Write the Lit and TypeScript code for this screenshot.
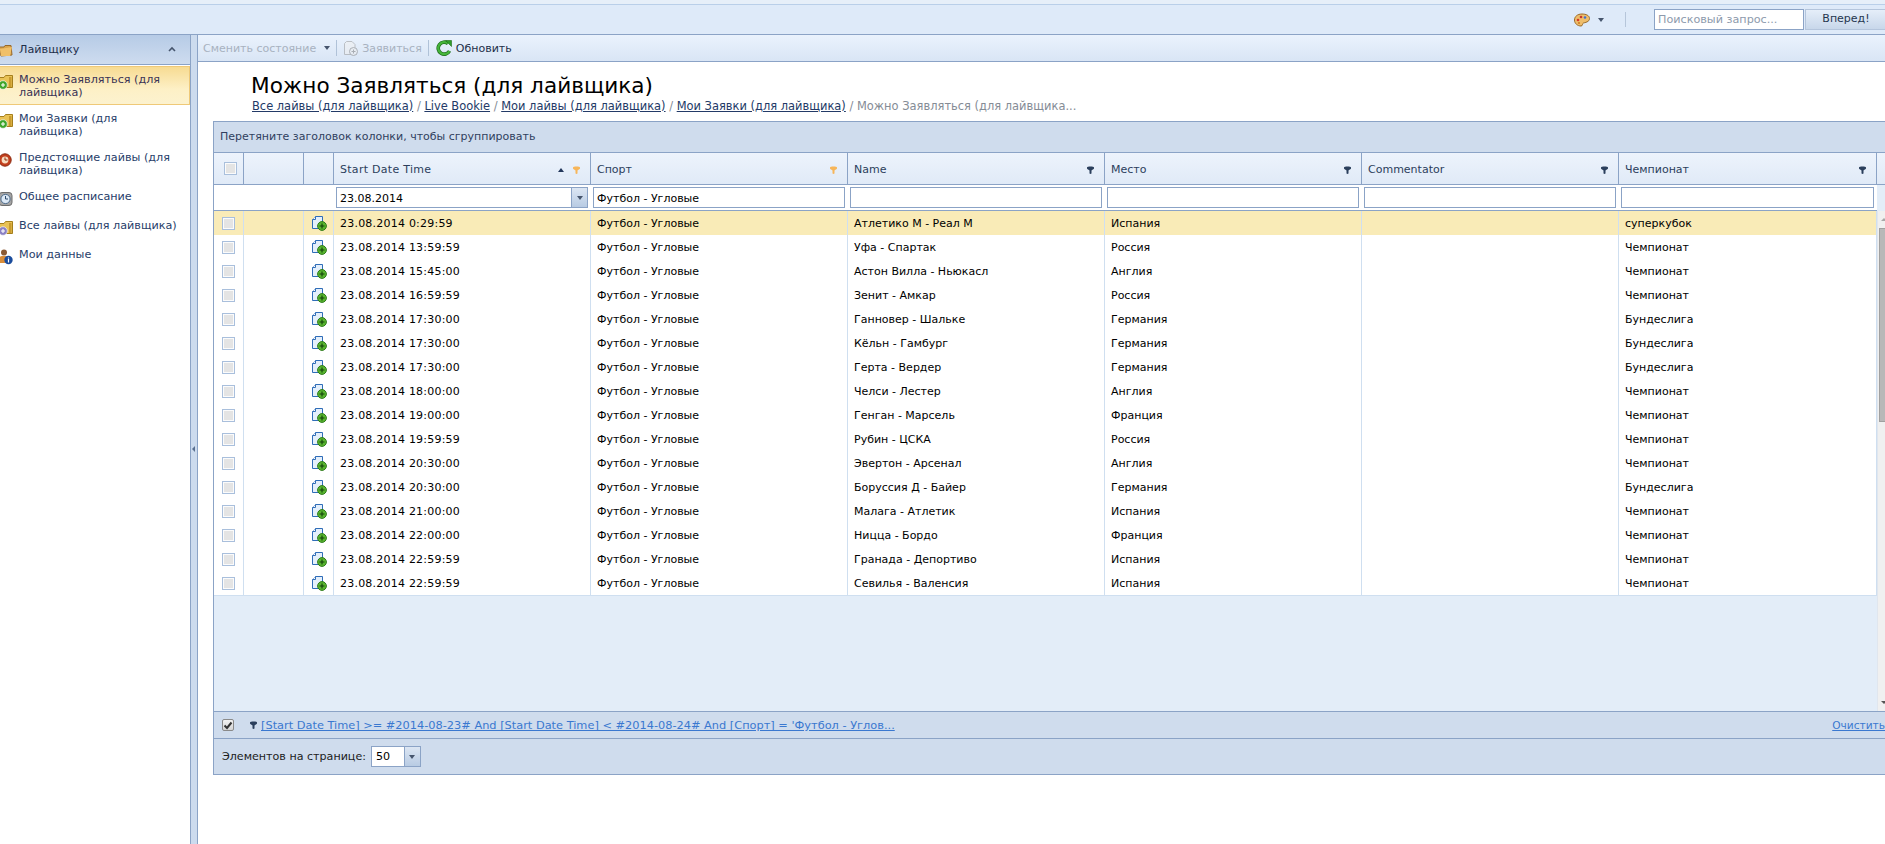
import { LitElement, html, css, svg } from "lit";
import { customElement } from "lit/decorators.js";

const rows = [
  ["23.08.2014 0:29:59", "Атлетико М - Реал М", "Испания", "суперкубок"],
  ["23.08.2014 13:59:59", "Уфа - Спартак", "Россия", "Чемпионат"],
  ["23.08.2014 15:45:00", "Астон Вилла - Ньюкасл", "Англия", "Чемпионат"],
  ["23.08.2014 16:59:59", "Зенит - Амкар", "Россия", "Чемпионат"],
  ["23.08.2014 17:30:00", "Ганновер - Шальке", "Германия", "Бундеслига"],
  ["23.08.2014 17:30:00", "Кёльн - Гамбург", "Германия", "Бундеслига"],
  ["23.08.2014 17:30:00", "Герта - Вердер", "Германия", "Бундеслига"],
  ["23.08.2014 18:00:00", "Челси - Лестер", "Англия", "Чемпионат"],
  ["23.08.2014 19:00:00", "Генган - Марсель", "Франция", "Чемпионат"],
  ["23.08.2014 19:59:59", "Рубин - ЦСКА", "Россия", "Чемпионат"],
  ["23.08.2014 20:30:00", "Эвертон - Арсенал", "Англия", "Чемпионат"],
  ["23.08.2014 20:30:00", "Боруссия Д - Байер", "Германия", "Бундеслига"],
  ["23.08.2014 21:00:00", "Малага - Атлетик", "Испания", "Чемпионат"],
  ["23.08.2014 22:00:00", "Ницца - Бордо", "Франция", "Чемпионат"],
  ["23.08.2014 22:59:59", "Гранада - Депортиво", "Испания", "Чемпионат"],
  ["23.08.2014 22:59:59", "Севилья - Валенсия", "Испания", "Чемпионат"],
];

const funnel = (c: string) => html`<svg class="fn" width="7" height="8" viewBox="0 0 7 8"><path d="M0 1.5C0 .2 7 .2 7 1.5V2.4C7 3.2 5 3.8 4.5 4.4V7.4L3.5 8L2.5 7.4V4.4C2 3.8 0 3.2 0 2.4Z" fill="${c}"/></svg>`;
const addDoc = () => html`<svg width="15" height="15" viewBox="0 0 15 15"><path d="M3.5 .5H10.5V12.5H.5V3.5Z" fill="#e4effb" stroke="#2f6db8"/><path d="M3.5 .5V3.5H.5" fill="#fff" stroke="#2f6db8"/><circle cx="10" cy="10" r="4.4" fill="#58b52f" stroke="#2d7a18"/><path d="M7.5 10H12.5M10 7.5V12.5" stroke="#123f0a" stroke-width="1.1"/></svg>`;
const folderBadge = (c: string) => svg`<path d="M-1 3.5H4L5.5 1.5H12.5V13.5H-1Z" fill="#e9c255" stroke="#a57f1d"/><path d="M9 3H11.5V13H9Z" fill="#c99b2f"/><circle cx="3" cy="11" r="4.3" fill="${c}" stroke="#f4f4f4" stroke-width=".7"/><path d="M1 11H5M3 9V13" stroke="#fff" stroke-width="1.1"/>`;

const menu = [
  { t: "Можно Заявляться (для\nлайвщика)", i: folderBadge("#3da52b"), sel: true },
  { t: "Мои Заявки (для\nлайвщика)", i: folderBadge("#3da52b") },
  { t: "Предстоящие лайвы (для\nлайвщика)", i: svg`<circle cx="5" cy="8" r="6.2" fill="#c23f1d" stroke="#8c2a10"/><circle cx="5" cy="8" r="3.4" fill="#f6dcc0"/><path d="M5 5.5V8H7.5" stroke="#8c2a10" fill="none"/>` },
  { t: "Общее расписание", i: svg`<rect x="-1" y="1.5" width="13" height="13" rx="3" fill="#a4a4a4" stroke="#6d6d6d"/><circle cx="5.5" cy="8" r="4.6" fill="#dce9f6" stroke="#4d6b8c"/><path d="M5.5 5V8H8" stroke="#2d4a6c" fill="none"/>` },
  { t: "Все лайвы (для лайвщика)", i: folderBadge("#8a80c4") },
  { t: "Мои данные", i: svg`<circle cx="4" cy="3.5" r="3" fill="#8b5a34"/><path d="M-1 14V10Q-1 7.5 2 7H6Q9 7.5 9 10V14Z" fill="#d98d3a"/><circle cx="8.5" cy="11" r="4.2" fill="#1b4c9c"/><path d="M8.5 10V13.5M8.5 8.5V9.4" stroke="#fff" stroke-width="1.2"/>` },
];

@customElement("app-root")
export class AppRoot extends LitElement {
  static styles = css`
    :host { display: block; width: 1885px; height: 844px; overflow: hidden; background: #fff; font-family: "DejaVu Sans", Verdana, sans-serif; font-size: 11px; color: #000; }
    * { box-sizing: border-box; }
    .top { height: 35px; background: #deeaf9; border-bottom: 1px solid #8ba3c6; display: flex; flex-direction: column; }
    .top-strip { height: 5px; background: #e6eff9; border-bottom: 1px solid #b9cfe9; }
    .top-row { flex: 1; display: flex; align-items: center; justify-content: flex-end; }
    .palette { display: flex; align-items: center; gap: 8px; margin-right: 21px; }
    .arrow { width: 0; height: 0; border-left: 3.5px solid transparent; border-right: 3.5px solid transparent; border-top: 4px solid #46556d; }
    .vsep { width: 1px; height: 15px; background: #b6c6da; margin-right: 28px; }
    .search { width: 150px; height: 21px; flex: none; background: #fff; border: 1px solid #8ba3c6; color: #8d9aac; padding: 0 3px; line-height: 19px; margin-right: 1px; font-size: 11.2px; }
    .go { width: 82px; height: 21px; flex: none; margin-right: -2px; border: 1px solid #b4c5dc; background: linear-gradient(#e5eef9, #c8d7ea); line-height: 17px; text-align: center; color: #25364f; }
    .body { display: flex; height: 809px; }
    .side { width: 191px; background: #fff; border-right: 1px solid #8ba3c6; flex: none; font-size: 11.2px; }
    .side-h { height: 30px; background: linear-gradient(#b6cbe6, #cedcef); border-bottom: 1px solid #8ba3c6; display: flex; align-items: center; padding-left: 19px; color: #1e2f4a; position: relative; }
    .folder { position: absolute; left: -1px; top: 8px; }
    .chev { position: absolute; right: 14px; top: 11px; }
    .items { padding-top: 1px; }
    .item { display: flex; padding: 6px 4px 4px 0; line-height: 13px; color: #28406a; border: 1px solid transparent; border-left: 0; }
    .item svg { flex: none; margin-top: 1px; overflow: visible; }
    .item span { margin-left: 3px; white-space: pre-line; }
    .item.sel { background: linear-gradient(#f7db92, #fdf0c6 60%, #fcf2cf); border-color: #efc978; color: #3a3355; }
    .i2 { height: 39px; }
    .i1 { height: 29px; }
    .split { width: 7px; flex: none; background: #ccdbee; border-right: 1px solid #8ba3c6; position: relative; }
    .split i { position: absolute; left: 1px; top: 411px; width: 0; height: 0; border-top: 3px solid transparent; border-bottom: 3px solid transparent; border-right: 3px solid #5a7090; }
    .main { flex: 1; min-width: 0; display: flex; flex-direction: column; }
    .tb { height: 27px; background: linear-gradient(#eaf2fd, #d9e5f5); border-bottom: 1px solid #8ba3c6; display: flex; align-items: center; padding-left: 5px; color: #1c2e48; }
    .dis { color: #a8b2c0; }
    .tb-sep { width: 1px; height: 16px; background: #b0c2d8; margin: 0 7px 0 6px; }
    .tb .arrow { margin-left: 8px; }
    .tb svg { margin-right: 4px; }
    .content { padding: 0 0 0 15px; flex: 1; min-width: 0; }
    .title { font-size: 21.6px; line-height: 24px; padding: 12px 0 0 38px; height: 37px; color: #000; }
    .crumbs { padding-left: 39px; height: 22px; line-height: 14px; color: #858c96; white-space: nowrap; font-size: 11.45px; }
    .crumbs a { color: #233a67; text-decoration: underline; }
    .grid { width: 1672px; height: 654px; border: 1px solid #8ba3c6; border-right: 0; background: #e3edf8; display: flex; flex-direction: column; position: relative; }
    .group { height: 31px; flex: none; background: #cfdced; border-bottom: 1px solid #8ba3c6; padding-left: 6px; line-height: 29px; color: #303f5e; }
    .r { display: grid; grid-template-columns: 30px 60px 30px 257px 257px 257px 257px 257px 258px; flex: none; width: 1663px; }
    .hd { height: 32px; width: 1671px; border-bottom: 1px solid #8ba3c6; background: linear-gradient(#edf3fc, #e0eaf7); }
    .hd > div { border-right: 1px solid #8ba3c6; display: flex; align-items: center; padding: 2px 10px 0 6px; color: #2c3e5c; position: relative; }
    .hd .fn { margin-left: auto; }
    .hd .sort { margin-left: auto; margin-right: 9px; width: 0; height: 0; border-left: 3.5px solid transparent; border-right: 3.5px solid transparent; border-bottom: 4px solid #23375b; }
    .hd .sort + .fn { margin-left: 0; }
    .sdt { letter-spacing: .28px; }
    .fl { height: 26px; background: #fff; border-bottom: 1px solid #8ba3c6; }
    .fl > div { padding: 2px 3px 0 2px; }
    .inp { height: 21px; width: 100%; border: 1px solid #8ba3c6; background: #fff; display: flex; align-items: center; padding: 1px 0 0 3px; color: #000; position: relative; }
    .drop { position: absolute; right: 0; top: 0; bottom: 0; width: 16px; background: linear-gradient(#dce6f3, #b8cbe3); border-left: 1px solid #8ba3c6; display: flex; align-items: center; justify-content: center; }
    .cb { width: 13px; height: 13px; flex: none; border: 1px solid #a9bfdc; background: #e4e4e4; box-shadow: inset 0 0 0 1px #fbfbfb; }
    .hd > div:first-child { padding: 0 0 0 10px; }
    .row { height: 24px; background: #fff; }
    .row.first { background: #f9ebb7; }
    .row > div { border-right: 1px solid #cfdff0; display: flex; align-items: center; padding-left: 6px; color: #000; white-space: nowrap; overflow: hidden; }
    .row > div:nth-child(1) { padding-left: 8px; }
    .row > div:nth-child(3) { padding-left: 8px; }
    .row:last-child { height: 25px; border-bottom: 1px solid #cfdff0; }
    .dt { letter-spacing: .22px; }
    .spacer { flex: 1; }
    .sb { position: absolute; right: 0; top: 89px; width: 8px; height: 500px; background: #f0f0f0; overflow: hidden; border-left: 1px solid #e0e6ee; }
    .sb b { position: absolute; left: 1px; top: 17px; width: 6px; height: 194px; background: #b8b8b8; border: 1px solid #a0a0a0; border-right: 0; }
    .sb .u { position: absolute; left: 3px; top: 7px; width: 0; height: 0; border-left: 3px solid transparent; border-right: 3px solid transparent; border-bottom: 3px solid #a8a8a8; }
    .sb .d { position: absolute; left: 3px; bottom: 7px; width: 0; height: 0; border-left: 3px solid transparent; border-right: 3px solid transparent; border-top: 3px solid #555; }
    .fbar { height: 27px; flex: none; background: #cfdced; border-top: 1px solid #8ba3c6; display: flex; align-items: center; padding-left: 8px; }
    .fcheck { width: 12px; height: 12px; border: 1px solid #8a8a8a; background: linear-gradient(#f2f2f2, #d4d4d4); border-radius: 2px; display: flex; align-items: center; justify-content: center; margin-right: 16px; }
    .link { color: #3a78d0; text-decoration: underline; margin-left: 4px; font-size: 11.35px; white-space: nowrap; }
    .clear { margin-left: auto; font-size: 10.6px; }
    .pager { height: 36px; flex: none; background: #cfdced; border-top: 1px solid #8ba3c6; display: flex; align-items: center; padding-left: 8px; color: #1c1c1c; font-size: 11.1px; }
    .pg { width: 50px; height: 21px; border: 1px solid #8ba3c6; background: #fff; margin-left: 5px; padding-left: 4px; line-height: 19px; position: relative; color: #000; }
  `;

  render() {
    const cols = ["Name", "Место", "Commentator", "Чемпионат"];
    return html`
      <div class="top">
        <div class="top-strip"></div>
        <div class="top-row">
          <div class="palette">
            <svg width="16" height="14" viewBox="0 0 16 14"><path d="M8 1C3.5 1 0.5 3.5 0.5 7S3.5 13 7 13C9 13 8 10.5 9.5 10S15.5 9 15.5 5.5C15.5 2.5 12 1 8 1Z" fill="#eebd6b" stroke="#9a6a28"/><circle cx="4" cy="7" r="1.3" fill="#d8362b"/><circle cx="7" cy="4" r="1.3" fill="#c8382d"/><circle cx="11" cy="4.5" r="1.3" fill="#3f6fd0"/><circle cx="5" cy="10" r="1.1" fill="#cf7c20"/></svg>
            <div class="arrow"></div>
          </div>
          <div class="vsep"></div>
          <div class="search">Поисковый запрос...</div>
          <div class="go">Вперед!</div>
        </div>
      </div>
      <div class="body">
        <div class="side">
          <div class="side-h">
            <svg class="folder" width="14" height="14" viewBox="0 0 14 14"><path d="M0 4H5L6 2.5H12L13 12L2 13Z" fill="#d9a54c" stroke="#97682a"/><path d="M1 6L13 4L11 13L2 13Z" fill="#f0c06a"/></svg>
            Лайвщику
            <svg class="chev" width="8" height="6" viewBox="0 0 8 6"><path d="M1 5L4 2L7 5" fill="none" stroke="#46556d" stroke-width="1.6"/></svg>
          </div>
          <div class="items">
            ${menu.map((m, i) => html`<div class="item ${m.sel ? "sel" : ""} ${i >= 3 ? "i1" : "i2"}">
              <svg width="16" height="16" viewBox="0 0 16 16">${m.i}</svg><span>${m.t}</span></div>`)}
          </div>
        </div>
        <div class="split"><i></i></div>
        <div class="main">
          <div class="tb">
            <span class="dis">Сменить состояние</span><div class="arrow"></div><div class="tb-sep"></div>
            <svg width="14" height="15" viewBox="0 0 14 15" opacity=".55"><path d="M2.5 .5H8L11 3.5V13.5H.5V2.5Z" fill="#f0f0f0" stroke="#9a9a9a"/><circle cx="9.5" cy="10.5" r="4" fill="#eee" stroke="#7e7e7e"/><path d="M7.5 10.5H11.5M9.5 8.5V12.5" stroke="#7e7e7e"/></svg>
            <span class="dis">Заявиться</span><div class="tb-sep"></div>
            <svg width="16" height="16" viewBox="0 0 16 16"><path d="M13.5 11A6 6 0 1 1 12 3.5" fill="none" stroke="#1e6b1a" stroke-width="3.6"/><path d="M13.5 11A6 6 0 1 1 12 3.5" fill="none" stroke="#45b53a" stroke-width="2.2"/><path d="M9.5 .5H15.5V6.5Z" fill="#2f9e2a" stroke="#1e6b1a" stroke-width=".6"/></svg>
            <span>Обновить</span>
          </div>
          <div class="content">
            <div class="title">Можно Заявляться (для лайвщика)</div>
            <div class="crumbs"><a>Все лайвы (для лайвщика)</a> / <a>Live Bookie</a> / <a>Мои лайвы (для лайвщика)</a> / <a>Мои Заявки (для лайвщика)</a> / Можно Заявляться (для лайвщика...</div>
            <div class="grid">
              <div class="group">Перетяните заголовок колонки, чтобы сгруппировать</div>
              <div class="r hd">
                <div><div class="cb"></div></div><div></div><div></div>
                <div><span class="sdt">Start Date Time</span><span class="sort"></span>${funnel("#f7b65a")}</div>
                <div>Спорт${funnel("#f7b65a")}</div>
                ${cols.map((c) => html`<div>${c}${funnel("#2b3f5c")}</div>`)}
              </div>
              <div class="r fl">
                <div></div><div></div><div></div>
                <div><div class="inp">23.08.2014<div class="drop"><div class="arrow"></div></div></div></div>
                <div><div class="inp">Футбол - Угловые</div></div>
                <div><div class="inp"></div></div><div><div class="inp"></div></div><div><div class="inp"></div></div><div><div class="inp"></div></div>
              </div>
              <div>
                ${rows.map((r, i) => html`<div class="r row ${i === 0 ? "first" : ""}">
                  <div><div class="cb"></div></div><div></div><div>${addDoc()}</div>
                  <div><span class="dt">${r[0]}</span></div><div>Футбол - Угловые</div><div>${r[1]}</div><div>${r[2]}</div><div></div><div>${r[3]}</div>
                </div>`)}
              </div>
              <div class="spacer"></div>
              <div class="sb"><span class="u"></span><b></b><span class="d"></span></div>
              <div class="fbar">
                <div class="fcheck"><svg width="10" height="9" viewBox="0 0 10 9"><path d="M1.5 4.5L4 7L8.5 1.5" fill="none" stroke="#333" stroke-width="2"/></svg></div>
                ${funnel("#2b3f5c")}
                <a class="link">[Start Date Time] &gt;= #2014-08-23# And [Start Date Time] &lt; #2014-08-24# And [Спорт] = 'Футбол - Углов...</a>
                <a class="link clear">Очистить</a>
              </div>
              <div class="pager">Элементов на странице:
                <div class="pg">50<div class="drop"><div class="arrow"></div></div></div>
              </div>
            </div>
          </div>
        </div>
      </div>
    `;
  }
}
